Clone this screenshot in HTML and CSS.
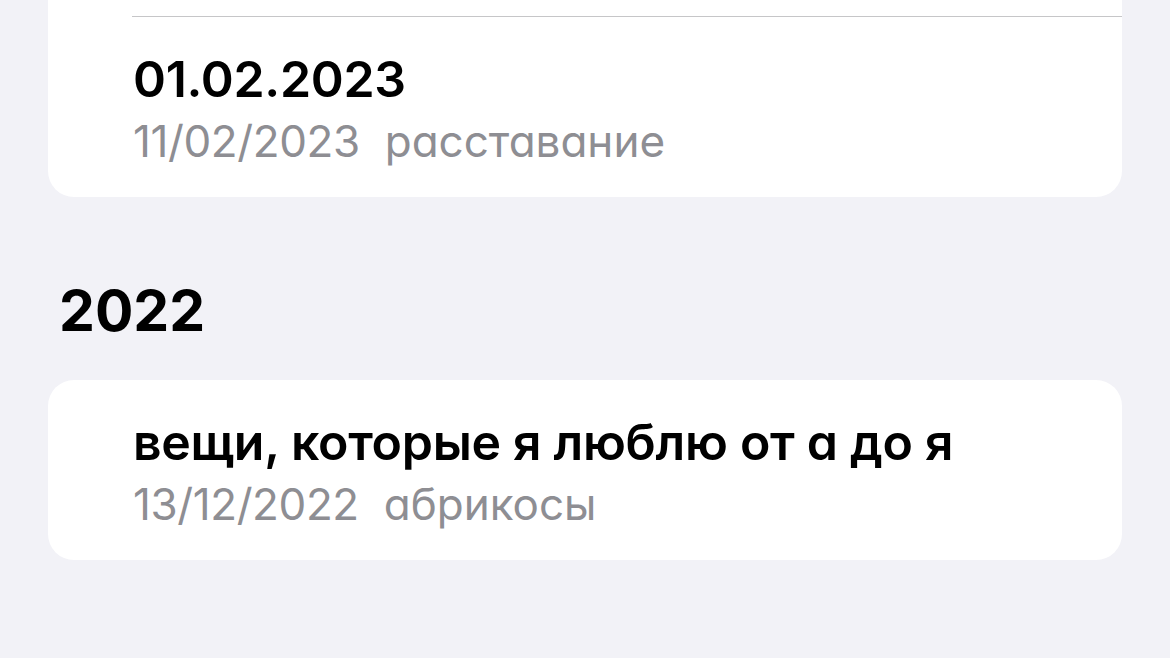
FILE: index.html
```html
<!DOCTYPE html>
<html lang="ru">
<head>
    <meta charset="UTF-8">
    <title>Заметки</title>
    <meta name="viewport" content="width=device-width, initial-scale=1">
    <link rel="stylesheet" href="styles.css">
</head>
<body>
    <div class="note-group note-group-cut">
        <div class="note-row">
            <div class="note-title">01.02.2023</div>
            <div class="note-meta"><span class="note-date">11/02/2023</span>расставание</div>
        </div>
    </div>

    <h2 class="year">2022</h2>

    <div class="note-group">
        <div class="note-row note-row-first">
            <div class="note-title">вещи, которые я люблю от а до я</div>
            <div class="note-meta"><span class="note-date">13/12/2022</span>абрикосы</div>
        </div>
    </div>
</body>
</html>
```

FILE: styles.css
```css
body {
    font-family: Inter, "Liberation Sans", sans-serif;
    font-feature-settings: "cv11";
    background: #f2f2f7;
    margin: 0;
    padding: 0;
    color: #000;
}
.note-group {
    background-color: #ffffff;
    border-radius: 26px;
    margin: 0 48px;
}
/* list scrolled so the top of the group is off screen */
.note-group-cut {
    border-radius: 0 0 26px 26px;
    padding-top: 16px;
}
.note-row {
    margin-left: 84px;
    padding: 32px 0 24px 1px;
    border-top: 1px solid #c6c6c8;
}
.note-row-first {
    border-top: none;
}
.note-title {
    font-size: 50px;
    font-weight: 600;
    line-height: 60px;
    letter-spacing: -0.3px;
    white-space: nowrap;
}
.note-meta {
    font-size: 44px;
    line-height: 64px;
    color: #8e8e93;
    white-space: nowrap;
}
.note-date {
    margin-right: 25px;
    letter-spacing: -0.4px;
}
.year {
    font-size: 57px;
    font-weight: 700;
    line-height: 72px;
    margin: 78px 0 33px;
    padding-left: 59px;
}
```
